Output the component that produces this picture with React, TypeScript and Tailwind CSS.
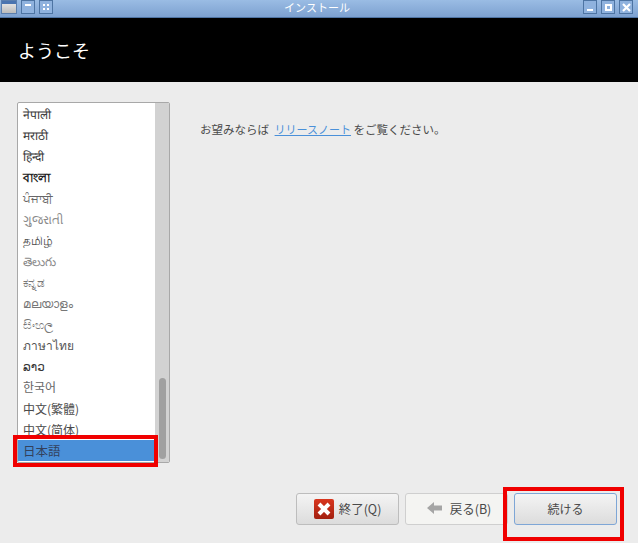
const languages = [
  { label: "नेपाली", tone: "text-[#3a3a3a]" },
  { label: "मराठी", tone: "text-[#3a3a3a]" },
  { label: "हिन्दी", tone: "text-[#3a3a3a]" },
  { label: "বাংলা", tone: "font-bold text-[#222222]" },
  { label: "ਪੰਜਾਬੀ", tone: "text-[#666666]" },
  { label: "ગુજરાતી", tone: "text-[#8a8a8a]" },
  { label: "தமிழ்", tone: "text-[#4a4a4a]" },
  { label: "తెలుగు", tone: "text-[#8a8a8a]" },
  { label: "ಕನ್ನಡ", tone: "text-[#777777]" },
  { label: "മലയാളം", tone: "text-[#777777]" },
  { label: "සිංහල", tone: "text-[#777777]" },
  { label: "ภาษาไทย", tone: "text-[#555555]" },
  { label: "ລາວ", tone: "text-[#333333]" },
  { label: "한국어", tone: "text-[#666666]" },
  { label: "中文(繁體)", tone: "text-[12.5px] text-[#4a4a4a]" },
  { label: "中文(简体)", tone: "text-[12.5px] text-[#4a4a4a]" },
];

const font = "font-['Noto_Sans_CJK_JP','DejaVu_Sans',sans-serif]";

function TitleButton({ children }: { children: React.ReactNode }) {
  return (
    <span className="flex h-[14px] w-[14px] items-center justify-center border border-[#4d74a3] bg-[#8fb2de]">
      {children}
    </span>
  );
}

export default function App() {
  return (
    <div className={`${font} relative flex h-[543px] w-[638px] flex-col overflow-hidden bg-[#ececec] text-[#4a4a4a]`}>
      {/* barra de titulo */}
      <div className="relative flex h-[18px] items-start justify-between border-b border-[#4f74a3] bg-gradient-to-b from-[#9abce4] to-[#7da1d0] pl-[1px] pr-[5px]">
        <div className="flex items-start gap-[4px]">
          <span className="flex h-[14px] w-[16px] flex-col border border-[#5b7fae] bg-gradient-to-b from-[#eeeeee] to-[#bbbbbb]">
            <span className="h-[3px] bg-[#4a74b0]" />
          </span>
          <TitleButton>
            <span className="mb-[4px] h-[2px] w-[6px] bg-white" />
          </TitleButton>
          <TitleButton>
            <span className="grid grid-cols-2 gap-[2px]">
              <span className="h-[2px] w-[2px] bg-white" />
              <span className="h-[2px] w-[2px] bg-white" />
              <span className="h-[2px] w-[2px] bg-white" />
              <span className="h-[2px] w-[2px] bg-white" />
            </span>
          </TitleButton>
        </div>
        <span className="mr-[2px] mt-[2px] text-[11px] leading-none text-white">インストール</span>
        <div className="flex items-start gap-[4px]">
          <TitleButton>
            <span className="mt-[5px] h-[2px] w-[6px] bg-white" />
          </TitleButton>
          <TitleButton>
            <span className="h-[7px] w-[7px] border-2 border-white" />
          </TitleButton>
          <TitleButton>
            <svg width="9" height="9" viewBox="0 0 9 9">
              <path d="M1 1l7 7M8 1L1 8" stroke="#fff" strokeWidth="2.2" />
            </svg>
          </TitleButton>
        </div>
      </div>

      {/* cabecalho */}
      <div className="flex h-[64px] items-center bg-black pl-[18px] text-[18px] text-white">ようこそ</div>

      {/* conteudo */}
      <div className="flex pl-[17px] pt-[20px]">
        <div className="flex h-[361px] w-[153px] overflow-hidden rounded-[2px] border border-[#a8a8a8] bg-white">
          <ul className="flex w-[138px] flex-col justify-end pb-[1px]">
            {languages.map(({ label, tone }) => (
              <li key={label} className={`flex h-[21.2px] items-center truncate pl-[5px] text-[12px] leading-none ${tone}`}>
                {label}
              </li>
            ))}
            <li className="flex h-[21px] items-center bg-[#4a90d9] pl-[5px] pt-[1px] text-[12.5px] leading-none text-[#33415c]">
              日本語
            </li>
          </ul>
          <div className="flex w-[14px] items-end justify-center bg-[#d2d2d2] pb-[3px]">
            <span className="h-[81px] w-[7px] rounded-full bg-[#a0a0a0]" />
          </div>
        </div>
        <p className="ml-[30px] mt-[18px] text-[11.5px] leading-[18px]">
          お望みならば <span className="ml-[3px] text-[11px] text-[#4a90d9] underline">リリースノート</span> をご覧ください。
        </p>
      </div>

      {/* botoes */}
      <div className="mt-[30px] flex justify-end gap-[6px] pr-[21px]">
        <button className="flex h-[32px] w-[103px] items-center justify-center gap-[5px] rounded-[3px] border border-[#bdbdbd] bg-gradient-to-b from-[#f4f4f4] to-[#dcdcdc] text-[12.5px]">
          <span className="flex h-[20px] w-[20px] items-center justify-center rounded-[2px] bg-gradient-to-b from-[#d9361e] to-[#a32010]">
            <svg width="16" height="16" viewBox="0 0 16 16">
              <path d="M3 3l10 10M13 3L3 13" stroke="#fff" strokeWidth="4" />
            </svg>
          </span>
          終了(Q)
        </button>
        <button className="flex h-[32px] w-[103px] items-center justify-center gap-[8px] rounded-[3px] border border-[#cfcfcf] bg-[#f4f4f2] pl-[5px] text-[12.5px]">
          <svg width="15" height="12" viewBox="0 0 15 12" className="mb-[2px]">
            <path d="M0 6l7-6v3.5h8v5H7V12z" fill="#a5a5a5" />
          </svg>
          戻る(B)
        </button>
        <button className="h-[32px] w-[103px] rounded-[3px] border border-[#7ea6d6] bg-gradient-to-b from-[#f4f4f4] to-[#dcdcdc] text-[12px]">
          続ける
        </button>
      </div>

      {/* marcas vermelhas da captura */}
      <div className="absolute left-[13px] top-[435px] h-[32px] w-[145px] border-4 border-[#f00000]" />
      <div className="absolute left-[503px] top-[487px] h-[54px] w-[121px] border-4 border-[#f00000]" />
    </div>
  );
}
